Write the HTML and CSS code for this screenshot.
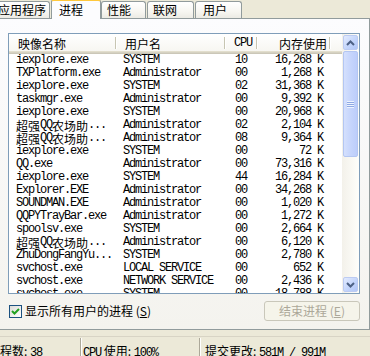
FILE: index.html
```html
<!DOCTYPE html>
<html lang="zh-CN">
<head>
<meta charset="utf-8">
<title>Windows 任务管理器</title>
<link rel="stylesheet" href="styles.css">
</head>
<body>
<div class="window">
  <div class="tabs">
    <div class="tab t-app">应用程序</div>
    <div class="tab sel">进程</div>
    <div class="tab t-perf">性能</div>
    <div class="tab t-net">联网</div>
    <div class="tab t-user">用户</div>
  </div>
  <div class="panel">
    <div class="list">
      <div class="list-main">
        <div class="header">
          <div class="hc c1">映像名称</div>
          <div class="hc c2">用户名</div>
          <div class="hc c3 m">CPU</div>
          <div class="hc c4">内存使用</div>
          <div class="hc cf"></div>
        </div>
        <div class="rows m">
          <div class="row"><span class="c1">iexplore.exe</span><span class="c2">SYSTEM</span><span class="c3">10</span><span class="c4">16,268 K</span></div>
          <div class="row"><span class="c1">TXPlatform.exe</span><span class="c2">Administrator</span><span class="c3">00</span><span class="c4">1,268 K</span></div>
          <div class="row"><span class="c1">iexplore.exe</span><span class="c2">SYSTEM</span><span class="c3">02</span><span class="c4">31,368 K</span></div>
          <div class="row"><span class="c1">taskmgr.exe</span><span class="c2">Administrator</span><span class="c3">00</span><span class="c4">9,392 K</span></div>
          <div class="row"><span class="c1">iexplore.exe</span><span class="c2">SYSTEM</span><span class="c3">00</span><span class="c4">20,968 K</span></div>
          <div class="row"><span class="c1 mix"><span class="z">超强</span><span>QQ</span><span class="z">农场助</span><span>...</span></span><span class="c2">Administrator</span><span class="c3">02</span><span class="c4">2,104 K</span></div>
          <div class="row"><span class="c1 mix"><span class="z">超强</span><span>QQ</span><span class="z">农场助</span><span>...</span></span><span class="c2">Administrator</span><span class="c3">08</span><span class="c4">9,364 K</span></div>
          <div class="row"><span class="c1">iexplore.exe</span><span class="c2">SYSTEM</span><span class="c3">00</span><span class="c4">72 K</span></div>
          <div class="row"><span class="c1">QQ.exe</span><span class="c2">Administrator</span><span class="c3">00</span><span class="c4">73,316 K</span></div>
          <div class="row"><span class="c1">iexplore.exe</span><span class="c2">SYSTEM</span><span class="c3">44</span><span class="c4">16,284 K</span></div>
          <div class="row"><span class="c1">Explorer.EXE</span><span class="c2">Administrator</span><span class="c3">00</span><span class="c4">34,268 K</span></div>
          <div class="row"><span class="c1">SOUNDMAN.EXE</span><span class="c2">Administrator</span><span class="c3">00</span><span class="c4">1,020 K</span></div>
          <div class="row"><span class="c1">QQPYTrayBar.exe</span><span class="c2">Administrator</span><span class="c3">00</span><span class="c4">1,272 K</span></div>
          <div class="row"><span class="c1">spoolsv.exe</span><span class="c2">SYSTEM</span><span class="c3">00</span><span class="c4">2,664 K</span></div>
          <div class="row"><span class="c1 mix"><span class="z">超强</span><span>QQ</span><span class="z">农场助</span><span>...</span></span><span class="c2">Administrator</span><span class="c3">00</span><span class="c4">6,120 K</span></div>
          <div class="row"><span class="c1">ZhuDongFangYu...</span><span class="c2">SYSTEM</span><span class="c3">00</span><span class="c4">2,780 K</span></div>
          <div class="row"><span class="c1">svchost.exe</span><span class="c2">LOCAL SERVICE</span><span class="c3">00</span><span class="c4">652 K</span></div>
          <div class="row"><span class="c1">svchost.exe</span><span class="c2">NETWORK SERVICE</span><span class="c3">00</span><span class="c4">2,436 K</span></div>
          <div class="row"><span class="c1">svchost.exe</span><span class="c2">SYSTEM</span><span class="c3">00</span><span class="c4">18,788 K</span></div>
        </div>
      </div>
      <div class="sb">
        <div class="sb-btn"><svg width="9" height="6" viewBox="0 0 9 6"><path d="M1 5 L4.5 1.5 L8 5" fill="none" stroke="#4d6185" stroke-width="2"/></svg></div>
        <div class="sb-thumb"><span class="grip"></span></div>
        <div class="sb-track"></div>
        <div class="sb-btn"><svg width="9" height="6" viewBox="0 0 9 6"><path d="M1 1 L4.5 4.5 L8 1" fill="none" stroke="#4d6185" stroke-width="2"/></svg></div>
      </div>
    </div>
    <div class="controls">
      <div class="check">
        <span class="box"><svg width="9" height="9" viewBox="0 0 9 9"><path d="M1 4 L3.5 6.5 L8 2" fill="none" stroke="#21a121" stroke-width="2"/></svg></span>
        <span class="lbl">显示所有用户的进程 (<u>S</u>)</span>
      </div>
      <button class="btn" disabled>结束进程 (<u>E</u>)</button>
    </div>
  </div>
  <div class="status">
    <div class="sp sp1">进程数: <span class="m">38</span></div>
    <div class="sp sp2"><span class="m">CPU</span> 使用: <span class="m">100%</span></div>
    <div class="sp sp3">提交更改: <span class="m">581M / 991M</span></div>
  </div>
</div>
</body>
</html>
```
FILE: styles.css
```css
* { box-sizing: border-box; margin: 0; padding: 0; }
html, body { width: 370px; height: 356px; overflow: hidden; }
body {
  background: #ece9d8;
  font-family: "Noto Sans CJK SC", "Liberation Sans", sans-serif;
  font-size: 12px;
  color: #000;
}
.m {
  font-family: "Liberation Mono", "Noto Sans CJK SC", monospace;
  font-size: 12px;
  letter-spacing: -1.2px;
}
.z {
  font-family: "Noto Sans CJK SC", sans-serif;
  font-size: 12px;
  letter-spacing: 0;
}
.window { display: flex; flex-direction: column; height: 356px; }

/* tabs */
.tabs {
  display: flex;
  align-items: flex-end;
  height: 18px;
  margin-left: -6px;
  position: relative;
  z-index: 2;
}
.tab {
  height: 17px;
  border: 1px solid #919b9c;
  border-bottom: none;
  border-radius: 3px 3px 0 0;
  background: linear-gradient(#ffffff, #f7f6f1 60%, #ecebe4);
  display: flex;
  align-items: center;
  padding-left: 5px;
  line-height: 1;
  flex: none;
}
.t-app { width: 56px; padding-left: 3px; }
.tab.sel {
  width: 50px;
  height: 20px;
  margin-bottom: -1px;
  margin-left: 1px;
  background: #fcfcfe;
  border-top: 2px solid #ffc83c;
  padding-left: 7px;
  padding-bottom: 1px;
}
.t-perf { width: 45px; }
.t-net { width: 47px; margin-left: 1px; }
.t-user { width: 47px; margin-left: 1px; padding-left: 7px; }

/* panel */
.panel {
  height: 313px;
  border-top: 1px solid #919b9c;
  border-right: 1px solid #919b9c;
  border-bottom: 1px solid #919b9c;
  background: linear-gradient(#fcfcfe, #f4f3ee);
  padding: 14px 0 0 8px;
  position: relative;
  z-index: 1;
}
.list {
  width: 352px;
  height: 261px;
  border: 1px solid #7f9db9;
  background: #fff;
  display: flex;
}
.list-main { flex: 1; overflow: hidden; display: flex; flex-direction: column; }
.header {
  display: flex;
  height: 20px;
  flex: none;
  background: linear-gradient(#ffffff, #f6f5f0);
  border-bottom: 1px solid #cbc7b8;
  box-shadow: inset 0 -1px #d6d2c2, inset 0 -2px #e2decd;
}
.hc {
  position: relative;
  line-height: 19px;
  white-space: nowrap;
  flex: none;
}
.hc::after {
  content: "";
  position: absolute;
  right: 0;
  top: 3px;
  bottom: 4px;
  width: 1px;
  background: #c7c5b2;
  box-shadow: 1px 0 #fff;
}
.hc.cf { flex: 1; }
.hc.cf::after { display: none; }
.c1 { width: 107px; padding-left: 7px; }
.c2 { width: 109px; padding-left: 7px; }
.c3 { width: 32px; text-align: right; padding-right: 10px; }
.c4 { width: 73px; text-align: right; padding-right: 7px; }
.hc.c1 { padding-left: 9px; }
.hc.c2 { padding-left: 9px; }
.hc.c3 { padding-right: 5px; }
.hc.c4 { padding-right: 3px; }

.rows { flex: 1; overflow: hidden; }
.row { display: flex; height: 13px; line-height: 13px; white-space: nowrap; overflow: hidden; }
.row > span { flex: none; overflow: hidden; height: 13px; }
.row > .mix { display: flex; align-items: center; }
.mix > span { flex: none; line-height: 13px; }

/* scrollbar */
.sb {
  width: 17px;
  flex: none;
  display: flex;
  flex-direction: column;
  background: linear-gradient(to right, #f3f1ea, #fefefb);
  padding: 1px;
}
.sb-btn {
  height: 15px;
  flex: none;
  border: 1px solid #bccbf2;
  border-radius: 2px;
  background: linear-gradient(135deg, #e3ebfe, #c1d3fb 60%, #b2c7f7);
  display: flex;
  align-items: center;
  justify-content: center;
}
.sb-thumb {
  height: 106px;
  flex: none;
  margin-top: 1px;
  border: 1px solid #b3c6f2;
  border-radius: 2px;
  background: linear-gradient(to right, #d4e0fd, #c6d5fc 50%, #bccdfb);
  display: flex;
  align-items: center;
  justify-content: center;
}
.grip {
  width: 7px;
  height: 7px;
  background: repeating-linear-gradient(#eef4fe 0 1px, #8fa9e4 1px 2px);
}
.sb-track { flex: 1; }

/* controls */
.controls {
  width: 352px;
  height: 20px;
  margin-top: 7px;
  display: flex;
  justify-content: space-between;
  align-items: center;
}
.check { display: flex; align-items: center; margin-left: 1px; gap: 3px; }
.box {
  width: 13px;
  height: 13px;
  border: 1px solid #1c5180;
  background: linear-gradient(135deg, #dcdcd7, #ffffff);
  display: flex;
  align-items: center;
  justify-content: center;
}
.lbl { line-height: 14px; }
.btn {
  width: 96px;
  height: 20px;
  border: 1px solid #c9c7ba;
  border-radius: 3px;
  background: #f5f4ea;
  color: #aca899;
  font-family: "Noto Sans CJK SC", sans-serif;
  font-size: 12px;
  line-height: 1;
}

/* status bar */
.status {
  margin-top: 6px;
  height: 20px;
  display: flex;
  border-top: 1px solid #d8d4c5;
  padding-top: 7px;
  white-space: nowrap;
}
.sp { line-height: 14px; padding-left: 2px; position: relative; flex: none; }
.sp::after {
  content: "";
  position: absolute;
  right: 0;
  top: -6px;
  bottom: -10px;
  width: 1px;
  background: #aca899;
  box-shadow: 1px 0 #fff;
}
.sp1 { width: 95px; margin-left: -14px; }
.sp2 { width: 119px; }
.sp3 { padding-left: 5px; }
.sp3::after { display: none; }
```
